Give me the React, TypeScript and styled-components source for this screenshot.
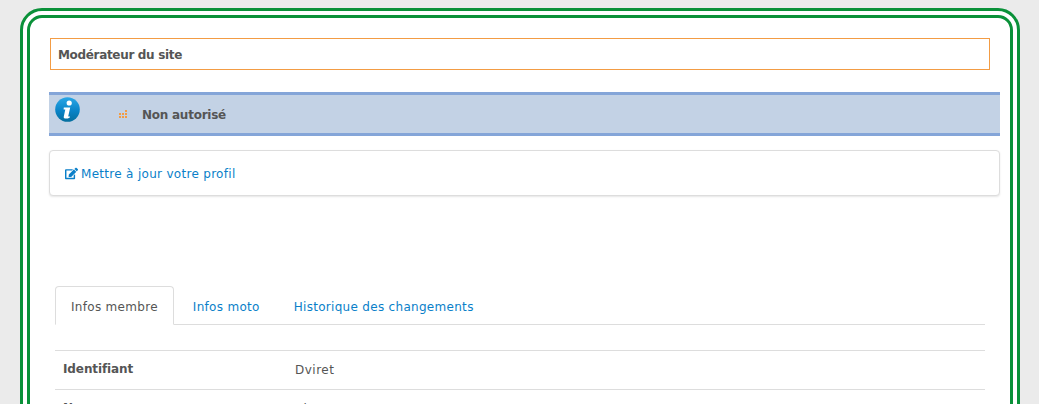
import React from "react";
import styled, { createGlobalStyle } from "styled-components";
import { FaEdit } from "react-icons/fa";

const Global = createGlobalStyle`
  html, body { height: 100%; overflow: hidden; }
  body {
    margin: 8px 0 0;
    background: #ebebeb;
    color: #555;
    font-family: "DejaVu Sans", Verdana, sans-serif;
    font-size: 12px;
    letter-spacing: 0.3px;
  }
`;

const Panel = styled.main`
  box-sizing: border-box;
  width: 1000px;
  margin: 0 0 0 20px;
  padding: 20px 10px 20px 19px;
  background: #fff;
  border: 10px double #0a9139;
  border-radius: 22px;
`;

const Title = styled.h1`
  box-sizing: border-box;
  height: 32px;
  margin: 0 10px 22px 1px;
  padding: 1px 7px 0;
  display: flex;
  align-items: center;
  font-size: 12px;
  font-weight: 700;
  letter-spacing: -0.33px;
  color: #555;
  border: 1px solid #f39c44;
`;

const InfoBar = styled.div`
  box-sizing: border-box;
  height: 44px;
  margin-bottom: 14px;
  padding: 0 0 0 6px;
  display: flex;
  align-items: flex-start;
  background: #c3d2e5;
  border-top: 3px solid #84a5d8;
  border-bottom: 3px solid #84a5d8;
`;

const InfoIcon = styled.svg`
  width: 25px;
  height: 25px;
  margin-top: 2px;
  flex: none;
`;

const Dots = styled.svg`
  width: 8px;
  height: 8px;
  margin: 15px 0 0 39px;
  flex: none;
`;

const InfoText = styled.strong`
  margin: 12px 0 0 15px;
  font-size: 12px;
  line-height: 16px;
  letter-spacing: -0.25px;
`;

const Card = styled.div`
  box-sizing: border-box;
  height: 46px;
  margin-bottom: 90px;
  padding: 1px 15px 0;
  display: flex;
  align-items: center;
  background: #fff;
  border: 1px solid #ddd;
  border-radius: 4px;
  box-shadow: 0 1px 2px rgba(0, 0, 0, 0.1);
`;

const ProfileLink = styled.a`
  display: flex;
  align-items: center;
  gap: 3px;
  color: #0a7fc9;
  text-decoration: none;
  svg { width: 13px; height: 13px; }
`;

const Tabs = styled.nav`
  box-sizing: border-box;
  display: flex;
  margin: 0 15px 25px 6px;
  height: 39px;
  border-bottom: 1px solid #ddd;
`;

const Tab = styled.a<{ $active?: boolean }>`
  box-sizing: border-box;
  height: 39px;
  padding: 2px ${(p) => (p.$active ? "15px" : "16px")} 0;
  margin-right: ${(p) => (p.$active ? "2px" : "0")};
  display: flex;
  align-items: center;
  color: ${(p) => (p.$active ? "#555" : "#0a7fc9")};
  background: ${(p) => (p.$active ? "#fff" : "transparent")};
  border: 1px solid ${(p) => (p.$active ? "#ddd" : "transparent")};
  border-bottom-color: ${(p) => (p.$active ? "#fff" : "transparent")};
  border-radius: 4px 4px 0 0;
`;

const Rows = styled.dl`
  margin: 0 15px 0 6px;
  border-bottom: 1px solid #ddd;
`;

const Row = styled.div`
  box-sizing: border-box;
  display: grid;
  grid-template-columns: 232px 1fr;
  height: 39px;
  padding-left: 8px;
  align-items: center;
  border-top: 1px solid #ddd;
`;

const Label = styled.dt`
  font-weight: 700;
  letter-spacing: -0.1px;
  margin-top: -2px;
`;

const Value = styled.dd`
  margin: 0;
  letter-spacing: 0.5px;
`;

export default function App() {
  return (
    <>
      <Global />
      <Panel>
        <Title>Modérateur du site</Title>
        <InfoBar>
          <InfoIcon viewBox="0 0 25 25" aria-hidden="true">
            <defs>
              <linearGradient id="infoFill" x1="0" y1="0" x2="0" y2="1">
                <stop offset="0" stopColor="#2aa7e6" />
                <stop offset="0.55" stopColor="#0a84c8" />
                <stop offset="1" stopColor="#066f9e" />
              </linearGradient>
            </defs>
            <circle cx="12.5" cy="12.5" r="12.3" fill="url(#infoFill)" />
            <circle cx="14.2" cy="6" r="2.6" fill="#fff" />
            <path
              d="M8.8 10.6h6.4l-1.9 8.4c-.1.6.4.7 1.6.2l-.3 1.5c-1.3.6-2.6.9-3.8.9-1.6 0-2.4-.8-2-2.2l1.5-7-1.7.2z"
              fill="#fff"
            />
          </InfoIcon>
          <Dots viewBox="0 0 8 8" aria-hidden="true" fill="#f39c44">
            <rect x="6" y="0" width="2" height="2" />
            <rect x="0" y="3" width="2" height="2" />
            <rect x="3" y="3" width="2" height="2" />
            <rect x="6" y="3" width="2" height="2" />
            <rect x="0" y="6" width="2" height="2" />
            <rect x="3" y="6" width="2" height="2" />
            <rect x="6" y="6" width="2" height="2" />
          </Dots>
          <InfoText>Non autorisé</InfoText>
        </InfoBar>
        <Card>
          <ProfileLink href="#">
            <FaEdit />
            Mettre à jour votre profil
          </ProfileLink>
        </Card>
        <Tabs>
          <Tab $active>Infos membre</Tab>
          <Tab>Infos moto</Tab>
          <Tab>Historique des changements</Tab>
        </Tabs>
        <Rows>
          <Row>
            <Label>Identifiant</Label>
            <Value>Dviret</Value>
          </Row>
          <Row>
            <Label>Nom</Label>
            <Value>Viret</Value>
          </Row>
        </Rows>
      </Panel>
    </>
  );
}
